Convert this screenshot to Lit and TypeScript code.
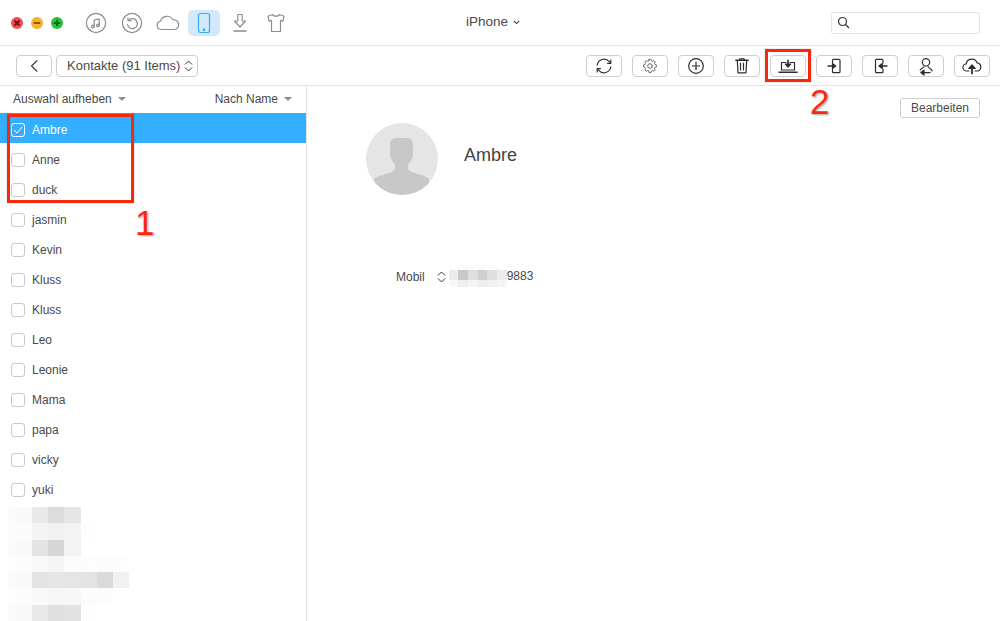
import { LitElement, html, css, svg } from "lit";
import { customElement } from "lit/decorators.js";

const NAMES = ["Ambre","Anne","duck","jasmin","Kevin","Kluss","Kluss","Leo","Leonie","Mama","papa","vicky","yuki"];
const M1 = [
  ["#fbfbfb","#f9f9f9","#e9e9e9","#dcdcdc","#e6e6e6","#fff","#fff","#fff"],
  ["#fcfcfc","#fbfbfb","#f4f4f4","#f1f1f1","#f4f4f4","#fefefe","#fff","#fff"],
  ["#fbfbfb","#f9f9f9","#e4e4e4","#d6d6d6","#f3f3f3","#fff","#fff","#fff"],
  ["#fdfdfd","#fcfcfc","#f8f8f8","#f5f5f5","#fcfcfc","#fdfdfd","#fcfcfc","#fdfdfd"],
  ["#fbfbfb","#f8f8f8","#e3e3e3","#e6e6e6","#e5e5e5","#e3e3e3","#dadada","#f1f1f1"],
  ["#fdfdfd","#fcfcfc","#f9f9f9","#f6f6f6","#f7f7f7","#fcfcfc","#fcfcfc","#fff"],
  ["#fbfbfb","#f9f9f9","#e9e9e9","#e0e0e0","#e2e2e2","#fefefe","#fff","#fff"],
];
const M2 = [
  ["#fdfdfd","#fbfbfb","#fcfcfc","#fcfcfc","#fcfcfc","#fdfdfd"],
  ["#ececec","#c9c9c9","#dedede","#cfcfcf","#dedede","#ececec"],
  ["#f9f9f9","#eeeeee","#f5f5f5","#eeeeee","#f1f1f1","#f5f5f5"],
];

const ico = (c: unknown) => html`<svg class="ic" viewBox="0 0 24 24" width="24" height="24" fill="none" stroke="currentColor" stroke-width="1.2" stroke-linecap="round" stroke-linejoin="round">${c}</svg>`;

const GEAR = "M10.700 5h2.600l.4 1.900 1.300.6 1.700-1 1.800 1.900-1 1.600.5 1.300 1.900.5v2.600l-1.900.5-.5 1.300 1 1.600-1.800 1.900-1.700-1-1.300.6-.4 1.900h-2.600l-.4-1.900-1.300-.6-1.700 1-1.800-1.900 1-1.600-.5-1.300-1.900-.5v-2.600l1.900-.5.5-1.300-1-1.600 1.800-1.900 1.700 1 1.300-.6z";

const TOOLS = [
  svg`<path d="M5.200 11a6.900 6.900 0 0 1 12-3.400l1.200 1.300M18.800 13a6.900 6.900 0 0 1-12 3.400l-1.200-1.300"/><path d="M18.800 6.100v3.200h-3.200M5.200 17.900v-3.200h3.200"/>`,
  svg`<g style="color:#666"><path stroke-width="1.200" transform="translate(2.300 1.300) scale(.81)" d=${GEAR}/><circle cx="12" cy="12" r="2.300" stroke-width="1"/></g>`,
  svg`<circle cx="12" cy="12" r="7.300"/><path d="M12 8.200v7.600M8.200 12h7.600"/>`,
  svg`<path stroke-width="1.500" d="M5.800 6.300h12.400"/><path d="M9.800 6V4.800h4.400V6M7.300 6.500l.7 12.300h8l.7-12.300M10.500 9v7M13.500 9v7"/>`,
  svg`<path d="M10 8.500H5.500V16h13V8.500H14"/><path stroke-width="1.500" d="M3 18.300h18"/><path stroke-width="1.600" d="M12 6.300v4"/><path fill="currentColor" d="M9.300 10h5.400L12 13.200z"/>`,
  svg`<path d="M10.500 9V6.300a1 1 0 0 1 1-1H17a1 1 0 0 1 1 1v11.400a1 1 0 0 1-1 1h-5.500a1 1 0 0 1-1-1V15"/><path stroke-width="1.400" d="M6 12h5"/><path fill="currentColor" d="M10.500 9.500v5l3.200-2.500z"/>`,
  svg`<path d="M15 9V6.300a1 1 0 0 0-1-1H8.500a1 1 0 0 0-1 1v11.400a1 1 0 0 0 1 1H14a1 1 0 0 0 1-1V15"/><path stroke-width="1.400" d="M14 12h5"/><path fill="currentColor" d="M14.200 9.500v5L11 12z"/>`,
  svg`<circle cx="12" cy="8.300" r="3.700"/><path d="M10 12.500c-.3 1.500-2.800 1.800-3.800 3.500M14 12.500c.3 1.500 3.300 2 4.200 4.500"/><path stroke-width="1.400" d="M10 18.600h6"/><path fill="currentColor" d="M10 16.200v4.800l-3.200-2.400z"/>`,
  svg`<path d="M9 17H6.800a3.600 3.600 0 0 1-.6-7.200A5.600 5.600 0 0 1 17 8.800a4.200 4.200 0 0 1 .8 8.200H15"/><path stroke-width="1.800" d="M12 19.500v-6"/><path fill="currentColor" d="M8.800 14.500h6.400L12 10.800z"/>`,
];

@customElement("app-root")
export class AppRoot extends LitElement {
  static styles = css`
    :host { display: block; width: 1000px; height: 621px; overflow: hidden; position: relative; background: #fff; color: #4a4a4a; font-family: "Liberation Sans", Arial, sans-serif; font-size: 12px; }
    .title { height: 45px; border-bottom: 1px solid #e4e4e4; display: flex; align-items: center; position: relative; }
    .lights { display: flex; gap: 8px; margin-left: 11px; width: 60px; flex: none; }
    .light { width: 12px; height: 12px; display: block; }
    .nav { display: flex; align-items: center; margin-left: 9px; }
    .nav > div { width: 32px; height: 26px; margin-right: 4px; display: flex; align-items: center; justify-content: center; color: #8c8c8c; border-radius: 5px; }
    .nav > .act { background: #d3e9fb; color: #35aaf5; }
    .device { position: absolute; left: 466px; top: 14px; font-size: 13.500px; line-height: 16px; display: flex; align-items: center; gap: 5px; }
    .search { margin-left: auto; margin-right: 20px; width: 149px; height: 22px; box-sizing: border-box; border: 1px solid #e4e4e4; border-radius: 2px; display: flex; align-items: center; padding-left: 5px; }
    .bar { height: 39px; border-bottom: 1px solid #e4e4e4; display: flex; align-items: center; padding: 0 10px 0 16px; }
    .btn { box-sizing: border-box; height: 22px; border: 1px solid #cfcfcf; border-radius: 4px; background: #fff; display: flex; align-items: center; justify-content: center; color: #2e2e2e; }
    .back { width: 36px; margin-right: 4px; }
    .sel { width: 142px; gap: 4px; color: #4a4a4a; font-size: 13px; white-space: nowrap; justify-content: flex-start; padding-left: 10px; }
    .tools { margin-left: auto; display: flex; gap: 10px; }
    .tools .btn { width: 36px; }
    .main { display: flex; height: 535px; }
    .left { width: 307px; box-sizing: border-box; flex: none; border-right: 1px solid #e4e4e4; }
    .lhead { height: 27px; box-sizing: border-box; display: flex; align-items: center; justify-content: space-between; padding: 0 14px 1px 13px; }
    .lhead span { display: flex; align-items: center; gap: 6px; }
    .tri { width: 0; height: 0; border: 4px solid transparent; border-top: 4px solid #8e8e8e; border-bottom: 0; }
    .row { height: 30px; box-sizing: border-box; padding: 3px 0 0 11px; display: flex; align-items: center; gap: 7px; }
    .row.on { background: #34aeff; color: #fff; }
    .cb { width: 14px; height: 14px; box-sizing: border-box; border: 1px solid #c9c9c9; border-radius: 3px; display: flex; align-items: center; justify-content: center; }
    .on .cb { border-color: #fff; }
    .mosaic { display: grid; grid-template-columns: 8px repeat(7, 16.140px); grid-auto-rows: 16.300px; margin-left: 8px; margin-top: 4px; }
    .right { flex: 1; position: relative; }
    .edit { position: absolute; right: 20px; top: 12px; width: 80px; height: 20px; box-sizing: border-box; border: 1px solid #cfcfcf; border-radius: 3px; display: flex; align-items: center; justify-content: center; background: #fff; font: inherit; color: inherit; padding: 0; }
    .avatar { position: absolute; left: 59px; top: 37px; width: 72px; height: 72px; }
    .name { position: absolute; left: 157px; top: 59px; font-size: 18px; line-height: 20px; color: #444; }
    .phone { position: absolute; left: 89px; top: 180px; display: flex; align-items: center; height: 22px; }
    .arrows { margin-left: 12px; margin-right: 3px; display: block; }
    .m2 { display: grid; grid-template-columns: repeat(6, 9.670px); grid-template-rows: 5px 10px 7px; height: 22px; margin-top: -2px; }
    .digits { margin-top: -2px; }
    .mark { position: absolute; border: 3px solid #f5290c; box-sizing: border-box; box-shadow: 0 0 2px rgba(0,0,0,.2); pointer-events: none; }
    .m1 { left: 7px; top: 114px; width: 127px; height: 89px; }
    .m2b { left: 765px; top: 49px; width: 46px; height: 33px; }
    .num { position: absolute; color: #f5290c; font-size: 35px; line-height: 36px; font-family: "Liberation Sans", sans-serif; text-shadow: 0 0 2px #fff, 1px 1px 2px rgba(0,0,0,.45); }
    .n1 { left: 135px; top: 205px; }
    .n2 { left: 810px; top: 84px; }
  `;

  render() {
    const lights = [["#ef5052","#7a1414","M3.500 3.500l5 5M8.500 3.500l-5 5"],["#f8b02e","#8a5a08","M2.800 6h6.400"],["#25c23c","#0a6616","M2.800 6h6.400M6 2.800v6.400"]];
    const updown = (cls: string) => html`<svg class=${cls} width="9" height="14" viewBox="0 0 9 14" fill="none" stroke="#333" stroke-width="1"><path d="M1 5.500l3.500-3.500L8 5.500M1 8.500l3.500 3.500L8 8.500"/></svg>`;
    return html`
      <div class="title">
        <div class="lights">${lights.map(l => html`<svg class="light" viewBox="0 0 12 12"><circle cx="6" cy="6" r="6" fill=${l[0]}/><path d=${l[2]} stroke=${l[1]} stroke-width="2" fill="none"/></svg>`)}</div>
        <div class="nav">
          <div>${ico(svg`<circle cx="12" cy="12" r="9.600"/><path d="M10.200 15.500V9l5-1.200v6.600"/><circle cx="8.900" cy="15.500" r="1.300"/><circle cx="13.900" cy="14.400" r="1.300"/>`)}</div>
          <div>${ico(svg`<circle cx="12" cy="12" r="9.600"/><path d="M8.600 9.300a5 5 0 1 1-1.100 4.200"/><path d="M8 6.800v2.900h3"/>`)}</div>
          <div>${ico(svg`<path d="M6.500 18.500H5a4.200 4.200 0 0 1-.5-8.300A6.800 6.800 0 0 1 17 8.800a4.900 4.900 0 0 1 1.500 9.700z"/>`)}</div>
          <div class="act">${ico(svg`<rect x="6.500" y="2.500" width="11" height="19" rx="2"/><circle cx="12" cy="18.800" r=".8" fill="currentColor"/>`)}</div>
          <div>${ico(svg`<path d="M9.800 3.500h4.400v6.500h3.300L12 16 6.500 10h3.300z"/><path stroke-width="1.400" d="M6 20h12"/>`)}</div>
          <div>${ico(svg`<path d="M8.600 3.500L4 5.200l1 5 2.500-.6V20.500h9V9.600l2.500.6 1-5-4.600-1.700c-.6 2.200-6.200 2.200-6.800 0z"/>`)}</div>
        </div>
        <div class="device">iPhone <svg width="7" height="5" viewBox="0 0 7 5" fill="none" stroke="#444" stroke-width="1.100"><path d="M.8 1l2.700 2.600L6.200 1"/></svg></div>
        <div class="search"><svg width="13" height="13" viewBox="0 0 13 13" fill="none" stroke="#333" stroke-width="1.200"><circle cx="5.500" cy="5.500" r="4"/><path d="M8.500 8.500l3.500 3.500"/></svg></div>
      </div>
      <div class="bar">
        <div class="btn back"><svg width="10" height="14" viewBox="0 0 10 14" fill="none" stroke="#333" stroke-width="1.100"><path d="M8.200 1.500L2.500 7l5.700 5.500"/></svg></div>
        <div class="btn sel">Kontakte (91 Items)${updown("")}</div>
        <div class="tools">${TOOLS.map(t => html`<div class="btn">${ico(t)}</div>`)}</div>
      </div>
      <div class="main">
        <div class="left">
          <div class="lhead"><span>Auswahl aufheben <i class="tri"></i></span><span>Nach Name <i class="tri"></i></span></div>
          ${NAMES.map((n, i) => html`<div class="row ${i === 0 ? "on" : ""}"><div class="cb">${i === 0 ? html`<svg width="10" height="8" viewBox="0 0 10 8" fill="none" stroke="#fff" stroke-width="1"><path d="M1 4l3 3 5-6"/></svg>` : ""}</div>${n}</div>`)}
          <div class="mosaic">${M1.flat().map(c => html`<div style="background:${c}"></div>`)}</div>
        </div>
        <div class="right">
          <button class="edit">Bearbeiten</button>
          <svg class="avatar" viewBox="0 0 72 72"><defs><clipPath id="c"><circle cx="36" cy="36" r="36"/></clipPath></defs><circle cx="36" cy="36" r="36" fill="#e5e5e5"/><path clip-path="url(#c)" fill="#c8c8c8" d="M24 22C24 17 27 15 30 15H41C44 15 47 17 47 22V31C47 35 44 39 42 42V46C43 49 50 50 55 52C58 53 61 54 63 56V72H8V56C10 54 13 53 17 52C22 50 28 49 29 46V42C27 39 24 35 24 31Z"/></svg>
          <div class="name">Ambre</div>
          <div class="phone">Mobil${updown("arrows")}<div class="m2">${M2.flat().map(c => html`<div style="background:${c}"></div>`)}</div><span class="digits">9883</span></div>
        </div>
      </div>
      <div class="mark m1"></div><div class="mark m2b"></div>
      <div class="num n1">1</div><div class="num n2">2</div>
    `;
  }
}
